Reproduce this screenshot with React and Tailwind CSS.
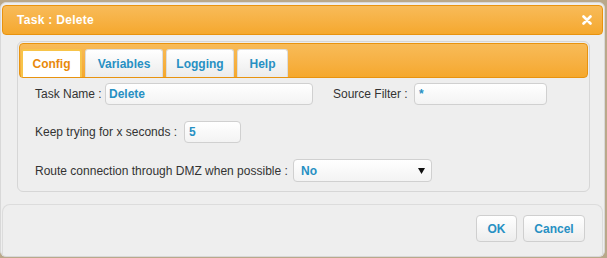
export default function App() {
  const font = { fontFamily: '"Liberation Sans", Arial, sans-serif' };
  const inputCls =
    "shrink-0 rounded-[4px] border border-[#d0d0d0] bg-gradient-to-b from-white to-[#f3f3f3] flex items-center font-bold text-[#2790c3]";
  const tabCls =
    "h-[28px] rounded-t-[3px] border border-b-0 border-[#dcdcdc] bg-gradient-to-b from-white to-[#ececec] flex items-center justify-center text-[12px] font-bold text-[#2790c3]";
  return (
    <div className="w-[607px] h-[258px] bg-[#b9a88a] relative overflow-hidden" style={font}>
      <div className="absolute left-0 top-[2px] w-[605px] h-[255px] bg-[#eeeeee] rounded-[6px] border border-[#d8d8d8] flex flex-col">
        {/* title bar */}
        <div className="mx-[1px] mt-[2px] h-[30px] rounded-[4px] border border-[#e8930f] bg-gradient-to-b from-[#f8bb58] to-[#f5a82c] flex items-center justify-between pl-[14px] pr-[10px]">
          <span className="text-white font-bold text-[12px] tracking-[0.3px]">Task : Delete</span>
          <svg width="10" height="10" viewBox="0 0 10 10">
            <path d="M1.5 1.5 L8.5 8.5 M8.5 1.5 L1.5 8.5" stroke="#fff" strokeWidth="2.6" strokeLinecap="round" />
          </svg>
        </div>
        {/* tab panel */}
        <div className="ml-[16px] mr-[14px] mt-[6px] h-[151px] rounded-[6px] border border-[#d6d6d6] p-[1px] flex flex-col">
          <div className="h-[35px] shrink-0 rounded-[4px] border border-[#e8930f] bg-gradient-to-b from-[#f8bb58] to-[#f5a82c] flex items-end gap-[3px] pl-[1px]">
            <div className="h-[28px] w-[61px] rounded-t-[3px] border-2 border-b-0 border-[#f7c44a] bg-white flex items-center justify-center text-[12px] font-bold text-[#e8890b]">Config</div>
            <div className={tabCls + " w-[78px]"}>Variables</div>
            <div className={tabCls + " w-[68px]"}>Logging</div>
            <div className={tabCls + " w-[51px]"}>Help</div>
          </div>
          <div className="pl-[16px] pt-[5px] text-[12px] text-[#333] whitespace-nowrap">
            <div className="flex items-center h-[22px]">
              <span className="w-[70px] shrink-0">Task Name :</span>
              <div className={inputCls + " w-[208px] h-[22px] pl-[3px]"}>Delete</div>
              <span className="ml-[20px] w-[81px] shrink-0">Source Filter :</span>
              <div className={inputCls + " w-[133px] h-[22px] pl-[4px]"}>*</div>
            </div>
            <div className="flex items-center h-[22px] mt-[16px]">
              <span className="w-[149px] shrink-0">Keep trying for x seconds :</span>
              <div className={inputCls + " w-[57px] h-[22px] pl-[4px]"}>5</div>
            </div>
            <div className="flex items-center h-[23px] mt-[16px]">
              <span className="w-[258px] shrink-0">Route connection through DMZ when possible :</span>
              <div className={inputCls + " w-[139px] h-[23px] justify-between pl-[7px] pr-[6px]"}>
                <span>No</span>
                <svg width="7" height="7" viewBox="0 0 7 7"><path d="M0 1 H7 L3.5 7 Z" fill="#111" /></svg>
              </div>
            </div>
          </div>
        </div>
        {/* footer */}
        <div className="mt-[12px] mx-[1px] flex-1 rounded-t-[8px] border-t border-x border-[#dcdcdc] flex items-start justify-end gap-[6px] pr-[17px] pt-[10px]">
          <div className="w-[41px] h-[27px] rounded-[4px] border border-[#cfcfcf] bg-gradient-to-b from-white to-[#ededed] flex items-center justify-center text-[12px] font-bold text-[#2790c3]">OK</div>
          <div className="w-[62px] h-[27px] rounded-[4px] border border-[#cfcfcf] bg-gradient-to-b from-white to-[#ededed] flex items-center justify-center text-[12px] font-bold text-[#2790c3]">Cancel</div>
        </div>
      </div>
    </div>
  );
}
